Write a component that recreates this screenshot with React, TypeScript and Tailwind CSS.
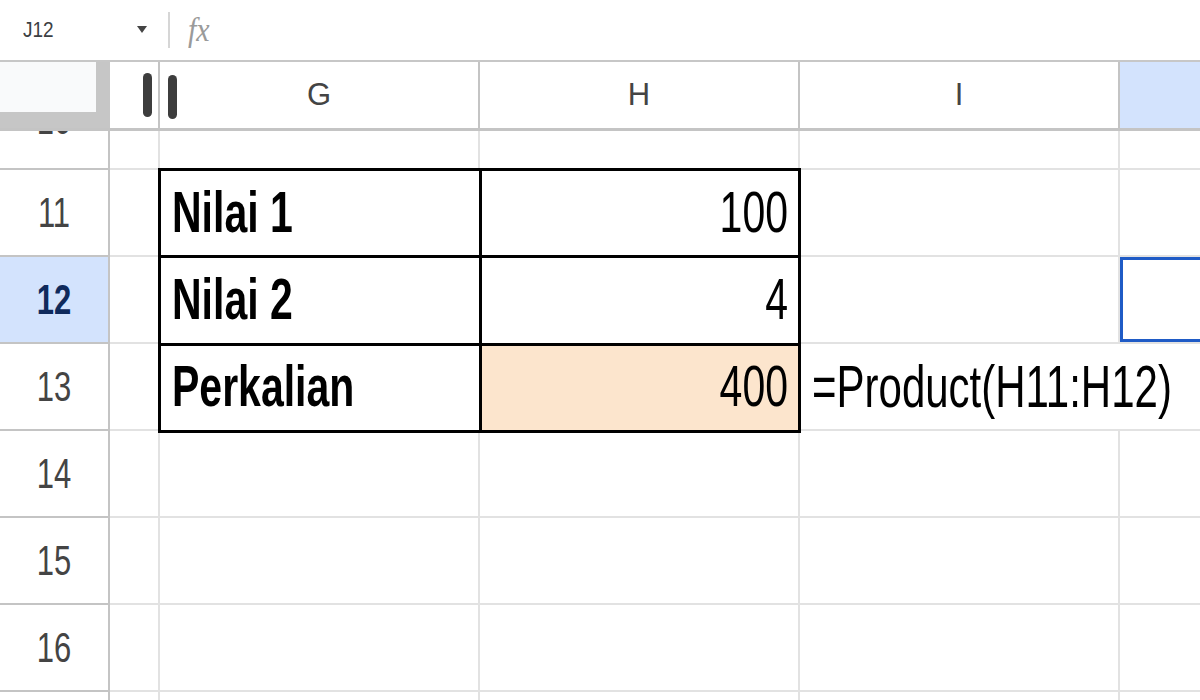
import React from 'react';

const font = { fontFamily: '"Liberation Sans", Arial, sans-serif' };

const bodyLine = 'border-r-2 border-b-2 border-[#e2e2e2]';
const headLine = 'border-r-2 border-b-2 border-[#c4c4c4]';

// cell text in the reference is stretched vertically
function Tall({ children, className = '' }: { children: React.ReactNode; className?: string }) {
    return <span className={`inline-block leading-none scale-y-[1.4] whitespace-nowrap ${className}`}>{children}</span>;
}

const tableRows = [
    { label: 'Nilai 1', value: '100', peach: false },
    { label: 'Nilai 2', value: '4', peach: false },
    { label: 'Perkalian', value: '400', peach: true },
];

function TopBar() {
    return (
        <div className="flex items-center h-[62px] border-b-2 border-[#c7c7c7] bg-white">
            <div className="w-[137px] pl-[23px] text-[19px] text-[#3c4043]">
                <span className="inline-block scale-y-[1.2]">J12</span>
            </div>
            <svg width="10" height="7" viewBox="0 0 10 7" className="mt-[-1px]">
                <path d="M0 0 L10 0 L5 7 Z" fill="#444" />
            </svg>
            <div className="ml-[21px] w-[2px] h-[36px] bg-[#d6d6d6]" />
            <span
                className="ml-[18px] text-[30px] italic text-[#9a9a9a] leading-none scale-y-[1.1]"
                style={{ fontFamily: '"Liberation Serif", "Times New Roman", serif' }}
            >
                fx
            </span>
        </div>
    );
}

function HeaderRow() {
    return (
        <div className="flex h-[69px] border-b-[3px] border-[#c4c4c4] bg-white">
            <div className="w-[110px] bg-[#c6c6c6]">
                <div className="w-[96px] h-[50px] bg-[#f9fafb]" />
            </div>
            <div className="w-[50px] border-r-2 border-[#c4c4c4] flex items-center justify-end pr-[6px]">
                <div className="w-[9px] h-[44px] rounded-full bg-[#3d3d3d]" />
            </div>
            <div className="relative w-[320px] border-r-2 border-[#c4c4c4] flex items-center justify-center text-[31px] text-[#444]">
                <div className="absolute left-[8px] top-[13px] w-[9px] h-[44px] rounded-full bg-[#3d3d3d]" />
                G
            </div>
            <div className="w-[320px] border-r-2 border-[#c4c4c4] flex items-center justify-center text-[31px] text-[#444]">H</div>
            <div className="w-[320px] border-r-2 border-[#c4c4c4] flex items-center justify-center text-[31px] text-[#444]">I</div>
            <div className="flex-1 bg-[#d3e3fd]" />
        </div>
    );
}

function RowNumber({ n }: { n: number }) {
    const active = n === 12;
    if (n === 10) {
        return (
            <div className={`${headLine} overflow-hidden bg-white`}>
                <div className="h-[87px] mt-[-55px] flex items-center justify-center text-[31px] text-[#444]">
                    <Tall>10</Tall>
                </div>
            </div>
        );
    }
    return (
        <div
            className={`${headLine} flex items-center justify-center text-[31px] ${
                active ? 'bg-[#d3e3fd] text-[#0f2a5c] font-bold' : 'bg-white text-[#444]'
            }`}
        >
            <Tall>{n}</Tall>
        </div>
    );
}

function Body() {
    const rows = [10, 11, 12, 13, 14, 15, 16, 17];
    const cells: React.ReactNode[] = [];
    rows.forEach((n) => {
        const inTable = n >= 11 && n <= 13;
        cells.push(<RowNumber key={`r${n}`} n={n} />);
        cells.push(<div key={`f${n}`} className={bodyLine} />);
        if (!inTable) {
            cells.push(<div key={`g${n}`} className={bodyLine} />);
            cells.push(<div key={`h${n}`} className={bodyLine} />);
        }
        if (n === 13) {
            cells.push(
                <div key={`i${n}`} className="border-b-2 border-[#e2e2e2] flex items-center pl-[12px] text-[42px] text-black overflow-visible">
                    <Tall>=Product(H11:H12)</Tall>
                </div>
            );
        } else {
            cells.push(<div key={`i${n}`} className={bodyLine} />);
        }
        if (n === 12) {
            cells.push(
                <div key={`j${n}`} className="border-b-2 border-[#e2e2e2]">
                    <div className="h-full border-[3px] border-r-0 border-[#1f5bc6]" />
                </div>
            );
        } else {
            cells.push(<div key={`j${n}`} className="border-b-2 border-[#e2e2e2]" />);
        }
    });

    return (
        <div className="grid grid-cols-[110px_50px_320px_320px_320px_80px] grid-rows-[39px_repeat(7,87px)] bg-white">
            {cells}
            <div className="col-start-3 col-span-2 row-start-2 row-span-3 -mt-[2px] -ml-[2px] -mr-[1px] -mb-[2px] flex flex-col border-[3px] border-black bg-white text-[41px] text-black">
                {tableRows.map((r, i) => (
                    <div key={r.label} className={`flex flex-1 ${i < 2 ? 'border-b-[3px] border-black' : ''}`}>
                        <div className="w-[321px] border-r-[3px] border-black flex items-center pl-[11px] font-bold">
                            <Tall>{r.label}</Tall>
                        </div>
                        <div className={`flex-1 flex items-center justify-end pr-[10px] ${r.peach ? 'bg-[#fce5cd]' : ''}`}>
                            <Tall>{r.value}</Tall>
                        </div>
                    </div>
                ))}
            </div>
        </div>
    );
}

export default function App() {
    return (
        <div className="w-[1200px] h-[700px] overflow-hidden bg-white" style={font}>
            <TopBar />
            <HeaderRow />
            <Body />
        </div>
    );
}
